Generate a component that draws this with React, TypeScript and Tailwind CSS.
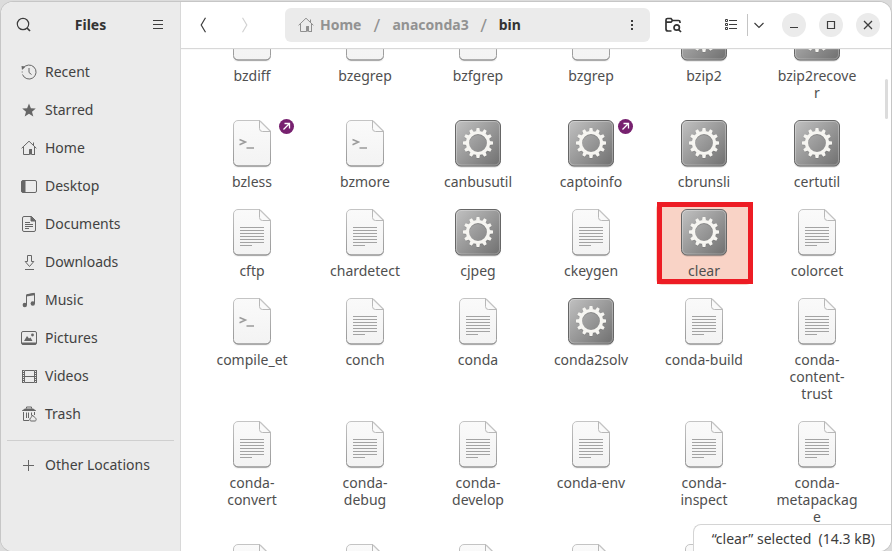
import type { ReactNode } from "react";

type Kind = "text" | "script" | "exec";
type FileItem = { name: string; kind: Kind; link?: boolean; selected?: boolean };

const files: FileItem[] = [
  { name: "bzdiff", kind: "script" },
  { name: "bzegrep", kind: "script" },
  { name: "bzfgrep", kind: "script" },
  { name: "bzgrep", kind: "script" },
  { name: "bzip2", kind: "exec" },
  { name: "bzip2recove\nr", kind: "exec" },
  { name: "bzless", kind: "script", link: true },
  { name: "bzmore", kind: "script" },
  { name: "canbusutil", kind: "exec" },
  { name: "captoinfo", kind: "exec", link: true },
  { name: "cbrunsli", kind: "exec" },
  { name: "certutil", kind: "exec" },
  { name: "cftp", kind: "text" },
  { name: "chardetect", kind: "text" },
  { name: "cjpeg", kind: "exec" },
  { name: "ckeygen", kind: "text" },
  { name: "clear", kind: "exec", selected: true },
  { name: "colorcet", kind: "text" },
  { name: "compile_et", kind: "script" },
  { name: "conch", kind: "text" },
  { name: "conda", kind: "text" },
  { name: "conda2solv", kind: "exec" },
  { name: "conda-build", kind: "text" },
  { name: "conda-\ncontent-\ntrust", kind: "text" },
  { name: "conda-\nconvert", kind: "text" },
  { name: "conda-\ndebug", kind: "text" },
  { name: "conda-\ndevelop", kind: "text" },
  { name: "conda-env", kind: "text" },
  { name: "conda-\ninspect", kind: "text" },
  { name: "conda-\nmetapackag\ne", kind: "text" },
  { name: "", kind: "text" },
  { name: "", kind: "text" },
  { name: "", kind: "text" },
  { name: "", kind: "text" },
  { name: "", kind: "text" },
  { name: "", kind: "text" },
];

const teeth = [0, 30, 60, 90, 120, 150, 180, 210, 240, 270, 300, 330];

function Defs() {
  return (
    <svg className="absolute size-0" aria-hidden="true">
      <defs>
        <linearGradient id="steel" x1="0" y1="0" x2="1" y2="1">
          <stop offset="0" stopColor="#c2c2c2" />
          <stop offset="1" stopColor="#6f6f6f" />
        </linearGradient>
        <linearGradient id="paper" x1="0" y1="0" x2="0" y2="1">
          <stop offset="0" stopColor="#fafafa" />
          <stop offset="1" stopColor="#f3f3f3" />
        </linearGradient>
        <linearGradient id="edge" x1="0" y1="0" x2="0" y2="1">
          <stop offset="0" stopColor="#c4c4c4" />
          <stop offset="1" stopColor="#979797" />
        </linearGradient>
      </defs>
    </svg>
  );
}

function FileIcon({ kind }: { kind: Kind }) {
  if (kind === "exec") {
    return (
      <svg width="48" height="48" viewBox="0 0 48 48" aria-hidden="true">
        <rect x="1" y="1.5" width="46" height="46" rx="6" fill="#000" opacity=".16" />
        <rect x="1.5" y="0.5" width="45" height="45.5" rx="5.5" fill="url(#steel)" stroke="#666" />
        <rect x="2.5" y="1.5" width="43" height="43.5" rx="4.5" fill="none" stroke="#fff" opacity=".28" />
        <g stroke="#555" opacity=".3" fill="none" transform="translate(24 24)">
          <circle r="10.4" strokeWidth="3" />
          {teeth.map((a) => (
            <path key={a} d="M0 -11V-14.6" strokeWidth="3" transform={`rotate(${a})`} />
          ))}
        </g>
        <g stroke="#f6f5f1" fill="none" transform="translate(24 23)">
          <circle r="10.5" strokeWidth="3.200" />
          {teeth.map((a) => (
            <path key={a} d="M-2 -11.4L-1.400 -15H1.400L2 -11.4Z" fill="#f6f5f1" stroke="none" transform={`rotate(${a})`} />
          ))}
        </g>
      </svg>
    );
  }
  return (
    <svg width="48" height="48" viewBox="0 0 48 48" aria-hidden="true">
      <path d="M9.5 1.5H32L43 12V43a4.5 4.5 0 0 1-4.5 4.5h-29A4.5 4.5 0 0 1 5 43V6z" fill="#000" opacity=".08" />
      <path d="M10 .5H32L42.500 11V41.500a4.500 4.500 0 0 1-4.500 4.500H10a4.500 4.500 0 0 1-4.500-4.500V5A4.500 4.500 0 0 1 10 .5z" fill="url(#paper)" stroke="url(#edge)" />
      <path d="M6 43.500a4.500 4 0 0 0 4 2.500H38a4.500 4 0 0 0 4-2.500" fill="none" stroke="#969696" />
      <path d="M31.500 .8V8.500a3 3 0 0 0 3 3H42.300z" fill="#fafafa" stroke="#b8b8b8" />
      {kind === "text" ? (
        <path d="M12 18.500H36M12 21.500H36M12 24.500H36M12 27.500H36M12 30.500H36M12 33.500H36M12 36.500H24" stroke="#a3a3a3" />
      ) : (
        <path d="M11.500 19.500L17.500 22L11.500 24.700M18.500 28H26" fill="none" stroke="#9b9b9b" strokeWidth="1.500" />
      )}
    </svg>
  );
}

function LinkBadge() {
  return (
    <span className="absolute top-[5px] right-[6px] flex size-[15px] items-center justify-center rounded-full bg-[#77216f]">
      <svg width="9" height="9" viewBox="0 0 9 9" fill="none" stroke="#fff" strokeWidth="1.3" aria-hidden="true">
        <path d="M1.500 7.500L7 2M2.500 1.500H7.500V6.500" />
      </svg>
    </span>
  );
}

function FileCell({ file }: { file: FileItem }) {
  return (
    <button
      type="button"
      aria-label={file.name ? undefined : "File"}
      className={`relative flex flex-col items-center gap-[5px] self-start rounded-md py-1.5 ${file.selected ? "bg-[#f9d3c6]" : ""}`}
    >
      <FileIcon kind={file.kind} />
      {file.name && <span className="text-center text-sm/[17px] whitespace-pre text-[#4f4f4f]">{file.name}</span>}
      {file.link && <LinkBadge />}
      {file.selected && <span className="absolute -top-px -right-px bottom-px left-px border-5 border-[#ed1c24]" />}
    </button>
  );
}

function Glyph({ children, color = "#666" }: { children: ReactNode; color?: string }) {
  return (
    <svg width="16" height="16" viewBox="0 0 16 16" fill="none" stroke={color} aria-hidden="true" className="shrink-0">
      {children}
    </svg>
  );
}

function HomeGlyph({ color }: { color?: string }) {
  return (
    <Glyph color={color}>
      <path d="M.6 8.300L8 1.200L15.400 8.300M2.500 7V14.500H8.500V9.500H10.500V14.500M13.500 7V15M11 14.500H13.500M12.500 5V2.500" />
      <path d="M8.500 9h2.500v5.500H8.500z" fill={color ?? "#666"} stroke="none" />
    </Glyph>
  );
}

const places: { label: string; icon: ReactNode }[] = [
  {
    label: "Recent",
    icon: (
      <Glyph>
        <path d="M2.200 4.200A7 7 0 1 1 1.500 10.500M8 4V8.500L10.500 10.500" />
        <path d="M.5 2L4.500 2.500L1 6z" fill="#666" stroke="none" />
        <path d="M1.200 7.500V8.500" />
      </Glyph>
    ),
  },
  {
    label: "Starred",
    icon: (
      <Glyph>
        <path d="M8 1.500L9.900 6.200L14.800 6.500L11 9.700L12.300 14.500L8 11.800L3.700 14.500L5 9.700L1.200 6.500L6.100 6.200z" fill="#666" stroke="none" />
      </Glyph>
    ),
  },
  { label: "Home", icon: <HomeGlyph /> },
  {
    label: "Desktop",
    icon: (
      <Glyph>
        <rect x=".5" y="2.500" width="15" height="12" rx="1.500" />
        <path d="M1 3H4V14H1z" fill="#666" stroke="#666" />
      </Glyph>
    ),
  },
  {
    label: "Documents",
    icon: (
      <Glyph>
        <path d="M3 .5H10.500L14.500 4.500V14a1.500 1.500 0 0 1-1.500 1.500H3A1.500 1.500 0 0 1 1.500 14V2A1.500 1.500 0 0 1 3 .5z" />
        <path d="M10 .5V5H14.500z" fill="#666" />
        <path d="M4 6.500H9M4 8.500H12M4 10.500H12M4 12.500H8" />
      </Glyph>
    ),
  },
  {
    label: "Downloads",
    icon: (
      <Glyph>
        <path d="M6.500 1.500H10.500V7.500H12.800L8.500 12.500L4.200 7.500H6.500zM4 15.500H13" />
      </Glyph>
    ),
  },
  {
    label: "Music",
    icon: (
      <Glyph>
        <path d="M5.500 13V3L13.500 1.500V11.500" />
        <path d="M5.500 2.200L13.500 .8V3.200L5.500 4.600z" fill="#666" stroke="none" />
        <circle cx="3.800" cy="13" r="2.200" fill="#666" stroke="none" />
        <circle cx="11.800" cy="11.500" r="2.200" fill="#666" stroke="none" />
      </Glyph>
    ),
  },
  {
    label: "Pictures",
    icon: (
      <Glyph>
        <rect x=".5" y="1.500" width="15" height="13" rx="1.500" />
        <path d="M1 13.500H15" strokeWidth="2" />
        <path d="M3 11L6 6L8 8.500L9.500 7.500L11.500 11z" fill="#666" stroke="none" />
        <circle cx="11.500" cy="5" r="1.400" fill="#666" stroke="none" />
      </Glyph>
    ),
  },
  {
    label: "Videos",
    icon: (
      <Glyph>
        <path d="M3.500 2.500H13.500V14.500H3.500zM3.500 8.500H13.500" />
        <path d="M1.500 2V15M15.500 2V15" />
        <path d="M2.500 2V15M14.500 2V15" strokeDasharray="1 1" />
      </Glyph>
    ),
  },
  {
    label: "Trash",
    icon: (
      <Glyph>
        <path d="M2.500 6V14.500H8M13.500 6V9M5.500 6.500V12M7.500 6.500V12M10.500 6.500V9.500M5.500 2.500V1H10.500V2.500" />
        <path d="M1 4.500L4 2.500H12L15 4.500V5H1z" fill="#666" stroke="none" />
        <path d="M11.500 9L12.500 10.500C16 12 15.500 15 14 15H10C8.500 15 8 12.500 11 10.500z" />
      </Glyph>
    ),
  },
];

function PlaceRow({ label, icon }: { label: string; icon: ReactNode }) {
  return (
    <button type="button" className="flex h-[38px] w-full items-center gap-2 px-3.5 text-left text-sm text-[#424242]">
      {icon}
      {label}
    </button>
  );
}

function Sidebar() {
  return (
    <aside className="flex w-[180px] shrink-0 flex-col border-r border-[#d8d8d8] bg-[#ebebeb]">
      <header className="flex h-[46px] items-center justify-between px-3.5">
        <button type="button" aria-label="Search">
          <Glyph color="#3d3d3d">
            <circle cx="8" cy="7" r="5.700" strokeWidth="1.200" />
            <path d="M12 11L15 14" strokeWidth="1.700" />
          </Glyph>
        </button>
        <h1 className="text-sm font-bold text-[#333]">Files</h1>
        <button type="button" aria-label="Main menu">
          <Glyph color="#3d3d3d">
            <path d="M3 3.500H13M3 7.500H13M3 11.500H13" />
          </Glyph>
        </button>
      </header>
      <nav aria-label="Places" className="px-1.5 pt-[5px]">
        {places.map((p) => (
          <PlaceRow key={p.label} label={p.label} icon={p.icon} />
        ))}
        <hr className="mt-[7px] mb-[5px] border-[#cfcfcf]" />
        <PlaceRow
          label="Other Locations"
          icon={
            <Glyph>
              <path d="M2 8.500H13M7.500 3V14" />
            </Glyph>
          }
        />
      </nav>
    </aside>
  );
}

function RoundButton({ label, children }: { label: string; children: ReactNode }) {
  return (
    <button type="button" aria-label={label} className="flex size-6 items-center justify-center rounded-full bg-[#ebebeb]">
      <Glyph color="#3d3d3d">{children}</Glyph>
    </button>
  );
}

function Toolbar() {
  return (
    <header className="z-10 flex h-[46px] shrink-0 items-center bg-white pr-[11px] pl-[15px] shadow-[0_1px_1px_#d8d8d8]">
      <button type="button" aria-label="Back">
        <Glyph color="#3d3d3d">
          <path d="M9.500 .8L5.200 8L9.500 15.200" strokeWidth="1.200" />
        </Glyph>
      </button>
      <button type="button" aria-label="Forward" className="ml-6">
        <Glyph color="#d2d2d2">
          <path d="M6.500 .8L10.800 8L6.500 15.200" strokeWidth="1.200" />
        </Glyph>
      </button>
      <nav
        aria-label="Location"
        className="ml-[33px] flex h-[34px] flex-1 items-center rounded-md bg-[#ebebeb] pr-2.5 pl-[13px] text-sm font-bold text-[#929292]"
      >
        <button type="button" className="flex items-center gap-1.5">
          <HomeGlyph color="#8f8f8f" />
          Home
        </button>
        <span className="w-[31px] text-center text-lg font-normal">/</span>
        <button type="button">anaconda3</button>
        <span className="w-[30px] text-center text-lg font-normal">/</span>
        <button type="button" className="text-[#333]">
          bin
        </button>
        <button type="button" aria-label="Folder menu" className="ml-auto">
          <Glyph color="#3d3d3d">
            <path d="M7 3h2v2H7zM7 7h2v2H7zM7 11h2v2H7z" fill="#3d3d3d" stroke="none" />
          </Glyph>
        </button>
      </nav>
      <button type="button" aria-label="Search this folder" className="ml-[15px]">
        <svg width="17" height="16" viewBox="0 0 17 16" fill="none" stroke="#333" strokeWidth="1.700" aria-hidden="true">
          <path d="M6.500 14H3A2 2 0 0 1 1 12V3A1.500 1.500 0 0 1 2.500 1.500H6L7.500 3.500H13.500A1.500 1.500 0 0 1 15 5V6M1 5.200H6L7.500 3.500" />
          <circle cx="11.700" cy="10.500" r="2.700" />
          <path d="M13.500 12.500L16 15" />
        </svg>
      </button>
      <button type="button" aria-label="List view" className="ml-[41px]">
        <Glyph color="#3d3d3d">
          <path d="M2.500 2.500h2v2h-2zM2.500 6.500h2v2h-2zM2.500 10.500h2v2h-2zM6 3.500h8M6 7.500h8M6 11.500h8" />
        </Glyph>
      </button>
      <span className="ml-2 h-[22px] w-px bg-[#c4c4c4]" />
      <button type="button" aria-label="View options" className="ml-[3px]">
        <Glyph color="#3d3d3d">
          <path d="M3.500 6L8 10.500L12.500 6" strokeWidth="1.200" />
        </Glyph>
      </button>
      <div className="ml-[15px] flex gap-[13px]">
        <RoundButton label="Minimize">
          <path d="M4 10.500H12" />
        </RoundButton>
        <RoundButton label="Maximize">
          <path d="M4.500 4.500H11.500V11.500H4.500z" strokeWidth="1.200" />
        </RoundButton>
        <RoundButton label="Close">
          <path d="M4 4L12 12M12 4L4 12" strokeWidth="1.300" />
        </RoundButton>
      </div>
    </header>
  );
}

export default function App() {
  return (
    <div className="h-screen overflow-hidden bg-[#dcdcdc] px-px pt-0.5 font-['Noto_Sans','Open_Sans',sans-serif]">
      <Defs />
      <div className="flex h-full overflow-hidden rounded-xl bg-white shadow-[0_0_0_1px_#c6c6c6]">
        <Sidebar />
        <section className="relative flex min-w-0 flex-1 flex-col">
          <Toolbar />
          <main className="min-h-0 flex-1 overflow-hidden">
            <div className="-mt-10 grid grid-cols-6 gap-x-[17px] gap-y-[7px] pr-[26px] pl-[23px]">
              {files.map((f, i) => (
                <FileCell key={i} file={f} />
              ))}
            </div>
          </main>
          <div className="absolute top-[77px] right-[3px] h-10 w-[3px] rounded-full bg-[#dcdcdc]" />
          <p className="absolute right-0 bottom-0 rounded-tl-lg border-t border-l border-[#d4d4d4] bg-white pt-1 pr-4 pb-0.5 pl-[18px] text-sm text-[#3d3d3d]">
            “clear” selected&nbsp; (14.3 kB)
          </p>
        </section>
      </div>
    </div>
  );
}
